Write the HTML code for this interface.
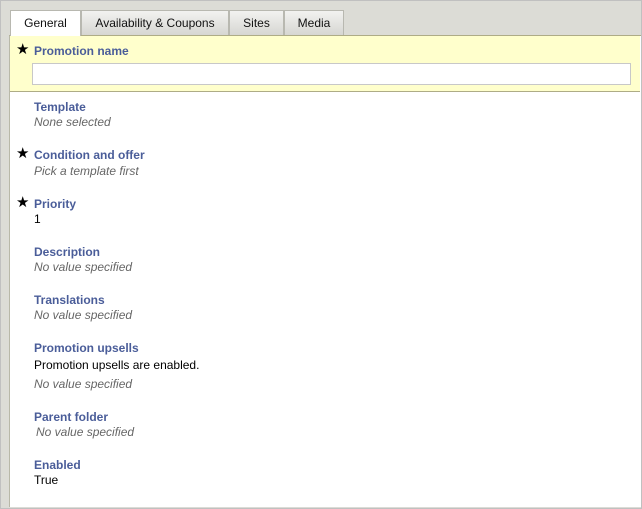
<!DOCTYPE html>
<html><head><meta charset="utf-8"><style>
body{margin:0;width:642px;height:509px;overflow:hidden;font-family:"Liberation Sans",Arial,sans-serif;font-size:12px;}
#o{position:absolute;left:0;top:0;width:640px;height:507px;border:1px solid #c0c0c0;background:#dcdcd6;}
#c{position:absolute;left:9px;top:35px;width:631px;height:471px;background:#fff;border-top:1px solid #aeac86;border-left:1px solid #b8b8a8;}
#y{position:absolute;left:10px;top:36px;width:630px;height:55px;background:#ffffcc;border-bottom:1px solid #aeac86;}
#in{position:absolute;left:32px;top:63px;width:597px;height:20px;background:#fff;border:1px solid #c8c8c8;}
.tab{position:absolute;top:10px;height:25px;line-height:25px;text-align:center;font-size:12px;color:#111;border:1px solid #b8b8b0;border-bottom:none;background:linear-gradient(#f2f2f0,#d6d6d2);box-sizing:border-box;}
.t{position:absolute;line-height:14px;white-space:nowrap;}
.l{color:#4a5d99;font-weight:bold;left:34px;}
.v{color:#666;font-style:italic;left:34px;}
.n{color:#000;left:34px;}
.s{position:absolute;left:16px;font-size:15px;line-height:14px;color:#000;}
</style></head><body>
<div id="o"></div>
<div id="c"></div>
<div id="y"></div>
<div id="in"></div>
<div class="tab" style="left:10px;width:71px;background:#fff;height:26px">General</div>
<div class="tab" style="left:81px;width:148px">Availability &amp; Coupons</div>
<div class="tab" style="left:229px;width:55px">Sites</div>
<div class="tab" style="left:284px;width:60px">Media</div>
<div class="s" style="top:43px">★</div>
<div class="t l" style="top:44px">Promotion name</div>
<div class="t l" style="top:100px">Template</div>
<div class="t v" style="top:115px">None selected</div>
<div class="s" style="top:147px">★</div>
<div class="t l" style="top:148px">Condition and offer</div>
<div class="t v" style="top:164px">Pick a template first</div>
<div class="s" style="top:196px">★</div>
<div class="t l" style="top:197px">Priority</div>
<div class="t n" style="top:212px">1</div>
<div class="t l" style="top:245px">Description</div>
<div class="t v" style="top:260px">No value specified</div>
<div class="t l" style="top:293px">Translations</div>
<div class="t v" style="top:308px">No value specified</div>
<div class="t l" style="top:341px">Promotion upsells</div>
<div class="t n" style="top:358px">Promotion upsells are enabled.</div>
<div class="t v" style="top:377px">No value specified</div>
<div class="t l" style="top:410px">Parent folder</div>
<div class="t v" style="top:425px;left:36px">No value specified</div>
<div class="t l" style="top:458px">Enabled</div>
<div class="t n" style="top:473px">True</div>
</body></html>
